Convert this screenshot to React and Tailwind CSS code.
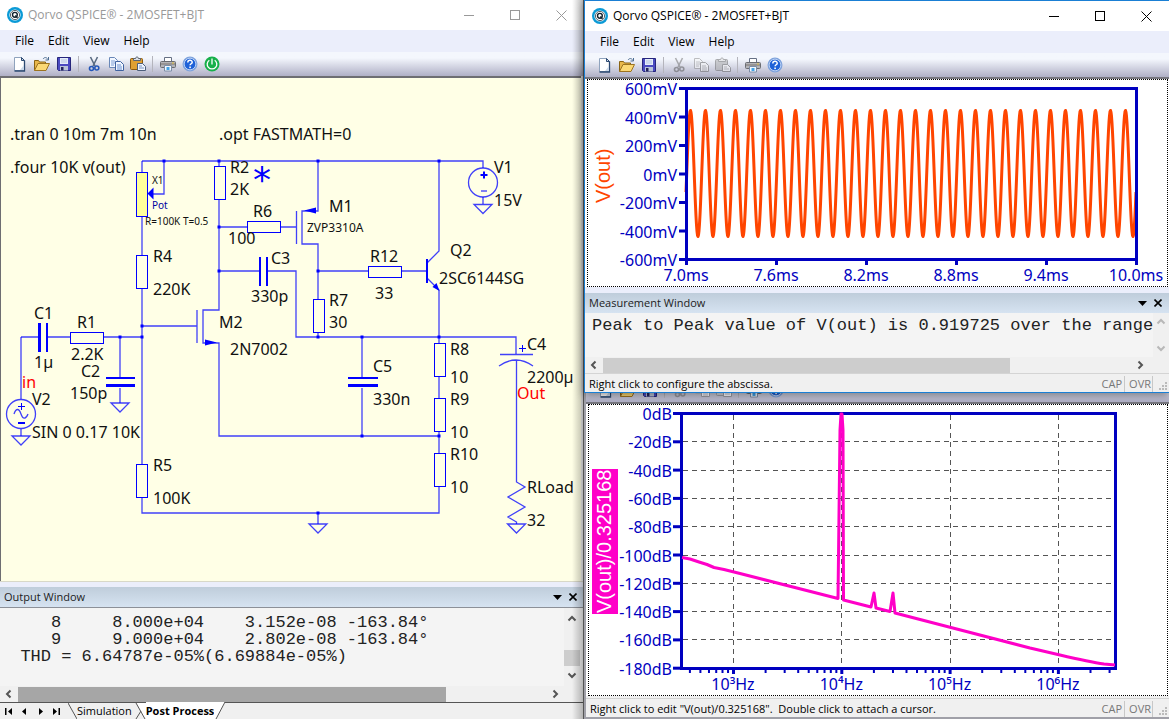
import React from 'react'

const UI_FONT = "font-['Open_Sans','Noto_Sans',sans-serif]"

const INK = '#0000ff'
const AXIS = '#0000c0'

/* ---------- Toolbar icons ---------- */

const NewIcon = () => (
  <svg className="w-4 h-4" viewBox="0 0 16 16">
    <path d="M2.5 1.5h7l3 3v10h-10z" fill="#fff" stroke="#8fa3bd" />
    <path d="M12.5 4.5v10.5h-10" fill="none" stroke="#2d4a72" strokeWidth="1.3" />
    <path d="M9.5 1.5v3h3z" fill="#cfdcec" stroke="#2d4a72" />
    <path d="M8 14l4-5v5z" fill="#cbd9ea" />
  </svg>
)

const OpenIcon = () => (
  <svg className="w-4 h-4" viewBox="0 0 16 16">
    <path d="M0.5 14.5v-10h4l1 1.5h6v3" fill="#e9b84b" stroke="#8a6414" />
    <path d="M0.5 14.5l3.5-7h11.5l-3.5 7z" fill="#fbd874" stroke="#9c7320" />
    <path d="M9 3c1.5-2 3.5-2 5 .5M14.5 1v3h-3" fill="none" stroke="#4d6d92" />
  </svg>
)

const SaveIcon = () => (
  <svg className="w-4 h-4" viewBox="0 0 16 16">
    <path d="M1.5 1.5h13v13h-12l-1-1z" fill="#4a4ac0" stroke="#26267c" />
    <rect x="4" y="2" width="8" height="6" fill="#e4ecfa" />
    <path d="M5 4h6M5 6h6" stroke="#b3c3de" />
    <rect x="4" y="10" width="8" height="4.5" fill="#b9c4d8" />
    <rect x="5" y="11" width="2.5" height="3.5" fill="#22225c" />
  </svg>
)

const CutIcon = () => (
  <svg className="w-4 h-4" viewBox="0 0 16 16" fill="none">
    <path d="M4.5 1l4.5 9M11.5 1L7 10" stroke="#5a6b82" strokeWidth="1.6" />
    <circle cx="5.5" cy="12.5" r="2" stroke="#2457b8" strokeWidth="1.6" />
    <circle cx="10.8" cy="12" r="2" stroke="#2457b8" strokeWidth="1.6" />
  </svg>
)

const CopyIcon = () => (
  <svg className="w-4 h-4" viewBox="0 0 16 16">
    <path d="M1.5 1.5h5l3 3v7h-8z" fill="#f2f7ff" stroke="#6a88b8" />
    <path d="M3 5h4M3 7h4M3 9h3" stroke="#7ea0d6" />
    <path d="M7.5 5.5h5l3 3v6h-8z" fill="#f2f7ff" stroke="#3f62a0" />
    <path d="M9 9h4M9 11h5M9 13h5" stroke="#6a90d0" />
  </svg>
)

const PasteIcon = () => (
  <svg className="w-4 h-4" viewBox="0 0 16 16">
    <rect x="0.5" y="2.5" width="12" height="11" rx="1" fill="#dfa033" stroke="#8a5a10" />
    <path d="M3.5 4.5v-2h2c0-2 3-2 3 0h2v2z" fill="#d8dde6" stroke="#5b6470" />
    <path d="M7.5 7.5h5l3 3v4h-8z" fill="#eef4ff" stroke="#4d5f7c" />
    <path d="M9 10h3M9 12h5" stroke="#7c95c2" />
  </svg>
)

const PrintIcon = () => (
  <svg className="w-4 h-4" viewBox="0 0 16 16">
    <path d="M4.5 6v-4.5h7v4.5" fill="#fff" stroke="#667084" />
    <rect x="0.5" y="5.5" width="15" height="6" rx="1" fill="#b4b4b8" stroke="#6a6c72" />
    <path d="M1 8h14" stroke="#7b7470" />
    <path d="M4.5 9.5h7v5.500h-7z" fill="#f2f9ff" stroke="#7d8ca6" />
    <path d="M6.5 11h3v3h-3z" fill="#45a3e6" />
    <rect x="12" y="6.5" width="2" height="1" fill="#e8c23c" />
  </svg>
)

const HelpIcon = () => (
  <svg className="w-4 h-4" viewBox="0 0 16 16">
    <circle cx="8" cy="8" r="6.8" fill="#1f62d8" stroke="#7fa3dc" strokeWidth="1.4" />
    <circle cx="8" cy="8" r="5.8" fill="none" stroke="#dbe8fb" strokeWidth=".8" />
    <path d="M5.8 6.5c0-3 4.4-2.800 4.400-.3 0 1.600-2.100 1.500-2.100 3.100" fill="none" stroke="#fff" strokeWidth="1.5" />
    <rect x="7.3" y="10.5" width="1.6" height="1.6" fill="#fff" />
  </svg>
)

const PowerIcon = () => (
  <svg className="w-4 h-4" viewBox="0 0 16 16">
    <circle cx="8" cy="8" r="7.5" fill="#17b04a" />
    <path d="M5.3 4.2a4.8 4.8 0 1 0 5.4 0M8 2.5v6" fill="none" stroke="#fff" strokeWidth="1.3" />
  </svg>
)

const Logo = () => (
  <svg className="w-4 h-4 shrink-0" viewBox="0 0 16 16">
    <circle cx="8" cy="8" r="8" fill="#0b9ad6" />
    <circle cx="8" cy="8" r="5.6" fill="#fff" />
    <circle cx="8" cy="8" r="4.600" fill="none" stroke="#10202c" strokeWidth=".7" />
    <circle cx="7.9" cy="7.8" r="2.4" fill="none" stroke="#10202c" strokeWidth="1.4" />
    <path d="M8.3 8.6l2.2 2.2" stroke="#10202c" strokeWidth="1.4" />
  </svg>
)

const Chevron = ({ dir, muted }) => {
  const d = {
    left: 'M6.5 1.5L3 5l3.5 3.5',
    right: 'M3.5 1.5L7 5L3.5 8.5',
    up: 'M1.5 6.5L5 3l3.5 3.5',
    down: 'M1.5 3.5L5 7l3.5-3.5',
  }[dir]
  return (
    <svg className="w-[10px] h-[10px]" viewBox="0 0 10 10">
      <path d={d} fill="none" stroke={muted ? '#b8b8b8' : '#555'} strokeWidth="2" />
    </svg>
  )
}

/* ---------- Window chrome ---------- */

const TitleBar = ({ active }) => (
  <div className={`flex items-center h-[30px] pl-[7px] bg-white ${active ? 'text-black' : 'text-[#999]'}`}>
    <Logo />
    <h1 className="flex-1 ml-[5px] text-[12px] leading-4 whitespace-nowrap">Qorvo QSPICE® - 2MOSFET+BJT</h1>
    <button aria-label="Minimize" className="flex justify-center items-center w-[46px] h-full">
      <svg className="w-[11px] h-[11px]" viewBox="0 0 11 11"><path d="M0 5.5h10" stroke="currentColor" /></svg>
    </button>
    <button aria-label="Maximize" className="flex justify-center items-center w-[46px] h-full">
      <svg className="w-[11px] h-[11px]" viewBox="0 0 11 11"><rect x=".5" y=".5" width="9" height="9" fill="none" stroke="currentColor" /></svg>
    </button>
    <button aria-label="Close" className="flex justify-center items-center w-[46px] h-full">
      <svg className="w-[11px] h-[11px]" viewBox="0 0 11 11"><path d="M.5.5l10 10M10.5.5l-10 10" stroke="currentColor" /></svg>
    </button>
  </div>
)

const MenuBar = () => (
  <nav className="flex items-center h-[22px] pl-2 bg-[#ebeefb] text-[12px] leading-4 text-black">
    {['File', 'Edit', 'View', 'Help'].map((item) => (
      <button key={item} className="px-[7px]">{item}</button>
    ))}
  </nav>
)

const ToolButton = ({ label, disabled, children }) => (
  <button
    aria-label={label}
    disabled={disabled}
    className={`flex items-center justify-center w-[22px] h-[22px] shrink-0 ${disabled ? 'grayscale opacity-50' : ''}`}
  >
    {children}
  </button>
)

const Separator = () => <span className="w-px h-4 ml-[3px] mr-1 shrink-0 bg-[#b4b4bc]" />

const ToolBar = ({ editable, power }) => (
  <div className="flex items-center h-[24px] pl-[9px] shrink-0 bg-linear-to-b from-[#f4f7fd] from-25% to-[#b0b0c6]">
    <ToolButton label="New"><NewIcon /></ToolButton>
    <ToolButton label="Open"><OpenIcon /></ToolButton>
    <ToolButton label="Save"><SaveIcon /></ToolButton>
    <Separator />
    <ToolButton label="Cut" disabled={!editable}><CutIcon /></ToolButton>
    <ToolButton label="Copy" disabled={!editable}><CopyIcon /></ToolButton>
    <ToolButton label="Paste" disabled={!editable}><PasteIcon /></ToolButton>
    <Separator />
    <ToolButton label="Print"><PrintIcon /></ToolButton>
    <ToolButton label="Help"><HelpIcon /></ToolButton>
    {power && <ToolButton label="Run"><PowerIcon /></ToolButton>}
  </div>
)

const PanelHeader = ({ title }) => (
  <div className="flex items-center h-[20px] pl-1 pr-[3px] bg-linear-to-b from-[#bfcddb] to-[#d6e3f1] text-[#1c1c1c]">
    <h2 className="flex-1 text-[11px] leading-4">{title}</h2>
    <button aria-label={`${title} options`} className="flex justify-center w-4">
      <svg className="w-[9px] h-[5px]" viewBox="0 0 9 5"><path d="M0 0h9L4.5 5z" fill="#000" /></svg>
    </button>
    <button aria-label={`Close ${title}`} className="flex justify-center w-4">
      <svg className="w-2 h-2" viewBox="0 0 8 8"><path d="M.5.5l7 7M7.5.5l-7 7" stroke="#000" strokeWidth="1.6" /></svg>
    </button>
  </div>
)

const HScroll = ({ thumb }) => (
  <div className="flex items-center h-[16px] bg-[#f0f0f0]">
    <button aria-label="Scroll left" className="flex justify-center w-[18px]"><Chevron dir="left" /></button>
    <div className="flex-1 h-[15px]"><div className={`h-full ${thumb}`} /></div>
    <button aria-label="Scroll right" className="flex justify-center w-[18px] mr-5"><Chevron dir="right" /></button>
  </div>
)

const StatusBar = ({ children }) => (
  <div className="flex items-center h-[19px] pt-[2px] pl-1 pr-px border-t border-[#d4d4d4] bg-[#f0f0f0] text-[11px] leading-4 text-black">
    <p className="flex-1 whitespace-pre">{children}</p>
    <span className="px-[2px] border-r border-[#c8c8c8] text-[#777]">CAP</span>
    <span className="pl-1 pr-px border-r border-[#c8c8c8] text-[#777]">OVR</span>
    <svg className="w-[9px] h-[9px] ml-[6px] mt-1" viewBox="0 0 9 9" fill="#bbb">
      <path d="M6 0h2v2h-2zM3 3h2v2h-2zM6 3h2v2h-2zM0 6h2v2h-2zM3 6h2v2h-2zM6 6h2v2h-2z" />
    </svg>
  </div>
)

/* ---------- Schematic ---------- */

const wires = [
  'M142 161H483V168M164 161V194H153',
  'M142 161V172M142 217V255M142 289V464M142 498V513H439V487',
  'M219 161V166M219 200V310H203V343H219V436H439',
  'M219 227H247M281 227H296M296.5 211V244',
  'M219 271H260M268 271H296V337H516V354',
  'M318 161V211H302V244H318V299M318 333V337',
  'M318 271H368M402 271H427',
  'M439 161V251L427 263M427 278L439 290V343M439 377V398M439 432V453',
  'M362 337V378M362 388V436',
  'M21 337H39M48 337H70M104 337H142M120 337V377M120 388V403M142 326H197M197 310V343',
  'M21 337V399M21 429V436',
  'M500 354.5H533M499 366Q516 354 533 366M516.5 360V482L525 487L508 497L525 507L508 517L516.5 522V524',
  'M318 513V524M483 197V204',
]

const resistorsV = [[214.5, 166.5], [136.5, 255.5], [136.5, 464.5], [313.5, 299.5], [434.5, 343.5], [434.5, 398.5], [434.5, 453.5]]
const resistorsH = [[247.5, 221.5], [368.5, 266.5], [70.5, 332.5]]
const grounds = [[120, 403], [21, 436], [318, 524], [483, 204.5], [516.5, 524]]
const dots = [[164, 161], [219, 161], [318, 161], [439, 161], [219, 227], [219, 271], [318, 271], [142, 326], [142, 337], [120, 337], [318, 337], [362, 337], [439, 337], [362, 436], [439, 436], [318, 513]]

const labels = [
  [10, 140, '.tran 0 10m 7m 10n'], [219, 140, '.opt FASTMATH=0'], [10, 173, '.four 10K v(out)'],
  [230, 173, 'R2'], [230, 195, '2K'], [253, 217, 'R6'], [228, 244, '100'],
  [271, 264, 'C3'], [251, 302, '330p'], [153, 262, 'R4'], [153, 295, '220K'],
  [34, 319, 'C1'], [34, 368, '1µ'], [77, 328, 'R1'], [71, 360, '2.2K'],
  [81, 377, 'C2'], [70, 399, '150p'], [32, 405, 'V2'], [32, 438, 'SIN 0 0.17 10K'],
  [219, 328, 'M2'], [230, 355, '2N7002'], [153, 471, 'R5'], [153, 504, '100K'],
  [329, 212, 'M1'], [370, 262, 'R12'], [375, 299, '33'], [329, 306, 'R7'], [329, 328, '30'],
  [450, 256, 'Q2'], [439, 284, '2SC6144SG'], [494, 173, 'V1'], [494, 206, '15V'],
  [527, 350, 'C4'], [527, 383, '2200µ'], [450, 355, 'R8'], [450, 383, '10'],
  [450, 405, 'R9'], [450, 438, '10'], [450, 460, 'R10'], [450, 493, '10'],
  [373, 372, 'C5'], [373, 405, '330n'], [527, 493, 'RLoad'], [527, 526, '32'],
]

const Schematic = () => (
  <svg className="block w-full h-auto font-['Noto_Sans',sans-serif]" viewBox="1 78 580 503">
    <g fill="none" stroke={INK} strokeOpacity=".75" strokeWidth="1.3">
      {wires.map((d) => <path key={d} d={d} />)}
      {grounds.map(([x, y]) => <path key={`${x}-${y}`} d={`M${x - 9} ${y}h18l-9 9z`} />)}
      <circle cx="483" cy="182.5" r="14.5" />
      <circle cx="21" cy="414" r="14.5" />
      <path d="M14 414c2-6 5-6 7 0s5 5 7 0" />
    </g>
    <g fill="#ffffe6" stroke={INK}>
      {resistorsV.map(([x, y]) => <rect key={`${x}-${y}`} x={x} y={y} width="11" height="33" />)}
      {resistorsH.map(([x, y]) => <rect key={`${x}-${y}`} x={x} y={y} width="33" height="11" />)}
      <rect x="136.5" y="172.5" width="11" height="44" fill="#ffff9c" />
    </g>
    {/* Capacitor plates, transistor base and source signs */}
    <g fill={INK}>
      <path d="M38 323h3v29h-3zM46 323h2v29h-2zM259 257h2v29h-2zM266 257h2v29h-2z" />
      <path d="M106 377h29v2h-29zM106 384h29v3h-29zM348 377h30v2h-30zM348 384h30v3h-30z" />
      <path d="M426 259h2v24h-2zM147.5 193.5l6-6v12zM217 342.5l-12-3v6zM304 210.5l12-3v6zM439.5 291l-7-4 4-4z" />
      <path d="M480.5 174h7v2h-7zM483 171.5h2v7h-2zM481 190.5h6v1h-6zM18 406h7v1h-7zM21 403h1v7h-1zM18 422h7v2h-7zM519 348h7v1h-7zM522 345h1v7h-1z" />
      {dots.map(([x, y]) => <rect key={`${x}-${y}`} x={x - 1.5} y={y - 1.5} width="3" height="3" />)}
    </g>
    <g className="text-[16px]" fill="#111">
      {labels.map(([x, y, t]) => <text key={`${x}-${y}`} x={x} y={y}>{t}</text>)}
      <text x="22" y="388" fill="#f00">in</text>
      <text x="517" y="399" fill="#f00">Out</text>
    </g>
    <text x="307" y="232" className="text-[12px]" fill="#111">ZVP3310A</text>
    <g className="text-[10px]" fill="#111">
      <text x="152" y="184">X1</text>
      <text x="152" y="209" fill="#0000a0">Pot</text>
      <text x="145" y="225">R=100K T=0.5</text>
    </g>
    <text x="253" y="192" className="font-['DejaVu_Sans',sans-serif] text-[36px]" fill={INK}>*</text>
  </svg>
)

/* ---------- Plots ---------- */

const sinePath = () => {
  const pts = []
  for (let x = 0; x <= 450; x += 0.5) {
    const y = 173.5 - 63 * Math.sin((2 * Math.PI * x) / 15 - 0.3)
    pts.push(`${(686 + x).toFixed(1)} ${y.toFixed(1)}`)
  }
  return 'M' + pts.join('L')
}

const TransientPlot = () => {
  const volts = ['600mV', '400mV', '200mV', '0mV', '-200mV', '-400mV', '-600mV']
  const times = ['7.0ms', '7.6ms', '8.2ms', '8.8ms', '9.4ms', '10.0ms']
  return (
    <svg className="block w-full h-auto overflow-visible font-['Noto_Sans',sans-serif] text-[16px]" viewBox="588 80 579 206">
      <path d={sinePath()} fill="none" stroke="#ff4500" strokeWidth="3" strokeLinejoin="round" />
      <rect x="686.5" y="88.5" width="450" height="171" fill="none" stroke={AXIS} strokeWidth="3" />
      {volts.map((v, i) => (
        <g key={v} fill={AXIS}>
          <rect x="679" y={87 + i * 28.5} width="7" height="3" />
          <text x="677" y={95 + i * 28.5} textAnchor="end">{v}</text>
        </g>
      ))}
      {times.map((t, i) => (
        <g key={t} fill={AXIS}>
          <rect x={685 + i * 90} y="260" width="3" height="5" />
          <text x={686 + i * 90} y="281" textAnchor="middle">{t}</text>
        </g>
      ))}
      <text transform="translate(610 203) rotate(-90)" className="font-['Liberation_Sans',sans-serif] text-[20px]" fill="#ff4500">V(out)</text>
    </svg>
  )
}

const SpectrumPlot = () => {
  const decades = [[3, '³'], [4, '⁴'], [5, '⁵'], [6, '⁶']]
  const freqX = (f) => 733 + 108.3 * (Math.log10(f) - 3)
  const minor = []
  for (let p = 2; p <= 6; p++) {
    for (let m = 2; m <= 9; m++) {
      const x = freqX(m * 10 ** p)
      if (x > 683 && x < 1114) minor.push(x)
    }
  }
  return (
    <svg className="block w-full h-auto overflow-visible font-['Noto_Sans',sans-serif] text-[16px]" viewBox="589 405 578 290">
      <g stroke="#555" strokeDasharray="5 4" fill="none">
        {decades.map(([n]) => <path key={n} d={`M${Math.round(freqX(10 ** n)) + 0.5} 415V667`} />)}
        {[1, 2, 3, 4, 5, 6, 7, 8].map((i) => <path key={i} d={`M683 ${Math.round(413 + i * 28.3) + 0.5}H1114`} />)}
      </g>
      <rect x="681.5" y="413.5" width="434" height="255" fill="none" stroke={AXIS} strokeWidth="3" />
      <path
        d="M682 557.5L690 559L699 562L707 564.5L714 567.5L724 569.5L740 573.5L838 598.5L840 430L841 414H842L843 430L843.5 600L871 607L874 593L876 608L890 611.5L893 593L895 613L949 627L1030 648L1060 655Q1090 662 1104 664L1115 665"
        fill="none" stroke="#ff00c8" strokeWidth="3" strokeLinejoin="round"
      />
      <g fill={AXIS}>
        {Array.from({ length: 10 }, (_, i) => (
          <g key={i}>
            <rect x="673" y={412 + i * 28.3} width="8" height="3" />
            <text x="672" y={420 + i * 28.3} textAnchor="end">{i ? `-${i * 20}dB` : '0dB'}</text>
          </g>
        ))}
        {minor.map((x) => <rect key={x} x={x - 1} y="669" width="2" height="4" />)}
        {decades.map(([n, sup]) => (
          <g key={n}>
            <rect x={freqX(10 ** n) - 1} y="669" width="3" height="5" />
            <text x={freqX(10 ** n)} y="690" textAnchor="middle">10{sup}Hz</text>
          </g>
        ))}
      </g>
      <rect x="592" y="469" width="26" height="145" fill="#ff00c8" />
      <text transform="translate(611 613) rotate(-90)" className="font-['Liberation_Sans',sans-serif] text-[20px]" fill="#fff">V(out)/0.325168</text>
    </svg>
  )
}

/* ---------- Windows ---------- */

const outputText = [
  '     8     8.000e+04    3.152e-08 -163.84°',
  '     9     9.000e+04    2.802e-08 -163.84°',
  '  THD = 6.64787e-05%(6.69884e-05%)',
].join('\n')

const navIcons = [
  ['First', 'M1 1h1.5v7h-1.5zM8 1v7l-4-3.5z'],
  ['Previous', 'M6 1v7l-4-3.5z'],
  ['Next', 'M3 1v7l4-3.5z'],
  ['Last', 'M1 1v7l4-3.5zM6.5 1h1.5v7h-1.5z'],
]

const SchematicWindow = () => (
  <section className="relative flex flex-col min-w-0 bg-[#f0f0f0]">
    <TitleBar />
    <MenuBar />
    <ToolBar editable power />
    <div className="flex-1 mr-[3px] border-t-2 border-l border-[#6e6e72] bg-[#ffffe6]">
      <Schematic />
    </div>
    <div className="h-[6px] border-t border-[#d8d8c8] bg-[#ebeefb]" />
    <PanelHeader title="Output Window" />
    <div className="flex h-[79px] border-t border-[#8c9098] bg-[#f4f4f4]">
      <pre className="flex-1 pt-[6px] overflow-hidden font-['Liberation_Mono',monospace] text-[17px] leading-[17px] text-[#222]">{outputText}</pre>
      <div className="flex flex-col items-center w-4 mr-[4px] py-[6px] bg-[#f0f0f0]">
        <button aria-label="Scroll up" className="flex"><Chevron dir="up" /></button>
        <div className="flex-1 flex flex-col justify-end w-full pb-1"><div className="h-4 bg-[#cdcdcd]" /></div>
        <button aria-label="Scroll down" className="flex"><Chevron dir="down" /></button>
      </div>
    </div>
    <HScroll thumb="w-[81%] bg-[#a6a6a6]" />
    <div className="flex items-end h-[17px] border-t border-[#555] text-[11px] leading-4 text-black">
      <div className="flex items-center h-full w-[68px] pr-1">
        {navIcons.map(([name, d]) => (
          <button key={name} aria-label={name} className="flex justify-center w-4">
            <svg className="w-[9px] h-[9px]" viewBox="0 0 9 9"><path d={d} /></svg>
          </button>
        ))}
      </div>
      <svg className="w-[9px] h-4" viewBox="0 0 9 16"><path d="M0 0l9 16" stroke="#555" /></svg>
      <button>Simulation</button>
      <svg className="w-[14px] h-4" viewBox="0 0 14 16">
        <path d="M5 0h9v16h-1z" fill="#fff" />
        <path d="M4 0l9 16M9 8l-5 8" stroke="#555" fill="none" />
      </svg>
      <button className="h-[17px] bg-white font-bold">Post Process</button>
      <svg className="w-[12px] h-[17px]" viewBox="0 0 12 17">
        <path d="M0 0h11L2 17H0z" fill="#fff" />
        <path d="M11 0L2 17" stroke="#555" />
      </svg>
    </div>
    {/* Shade cast by the windows on the right */}
    <div className="absolute inset-y-0 right-0 w-3 pointer-events-none border-r border-[#555] bg-linear-to-r from-transparent to-black/25" />
  </section>
)

const WaveformWindow = () => (
  <section className="relative border-y border-l border-[#1a7fd4] bg-[#f0f0f0] shadow-[0_2px_8px_rgba(0,0,0,0.45)]">
    <TitleBar active />
    <MenuBar />
    <ToolBar />
    <div className="pl-[2px] pr-px border-t-2 border-[#77777f] bg-white">
      <div className="border border-dotted border-black"><TransientPlot /></div>
    </div>
    <div className="h-[6px] bg-[#ebeefb]" />
    <PanelHeader title="Measurement Window" />
    <div className="flex h-[44px] bg-[#f4f4f4]">
      <pre className="flex-1 pl-[7px] pt-1 overflow-hidden font-['Liberation_Mono',monospace] text-[17px] leading-[17px] text-[#222]">Peak to Peak value of V(out) is 0.919725 over the range</pre>
      <div className="flex flex-col justify-between items-center w-4 py-1 bg-[#f0f0f0]">
        <button aria-label="Scroll up" className="flex"><Chevron dir="up" muted /></button>
        <button aria-label="Scroll down" className="flex"><Chevron dir="down" muted /></button>
      </div>
    </div>
    <HScroll thumb="w-[77%] bg-[#cdcdcd]" />
    <StatusBar>Right click to configure the abscissa.</StatusBar>
  </section>
)

const SpectrumWindow = () => (
  <section className="flex-1 flex flex-col border-l-2 border-b-2 border-[#a0a0a8] bg-[#f0f0f0]">
    <div className="flex flex-col justify-end h-[9px] overflow-hidden"><ToolBar /></div>
    <div className="pl-[2px] pr-px border-t-2 border-[#77777f] bg-white">
      <div className="border border-dotted border-black"><SpectrumPlot /></div>
    </div>
    <div className="flex-1" />
    <StatusBar>{'Right click to edit "V(out)/0.325168".  Double click to attach a cursor.'}</StatusBar>
  </section>
)

const App = () => (
  <main className={`grid grid-cols-[584fr_585fr] min-h-screen bg-[#f0f0f0] ${UI_FONT}`}>
    <SchematicWindow />
    <div className="flex flex-col min-w-0">
      <WaveformWindow />
      <SpectrumWindow />
    </div>
  </main>
)

export default App
